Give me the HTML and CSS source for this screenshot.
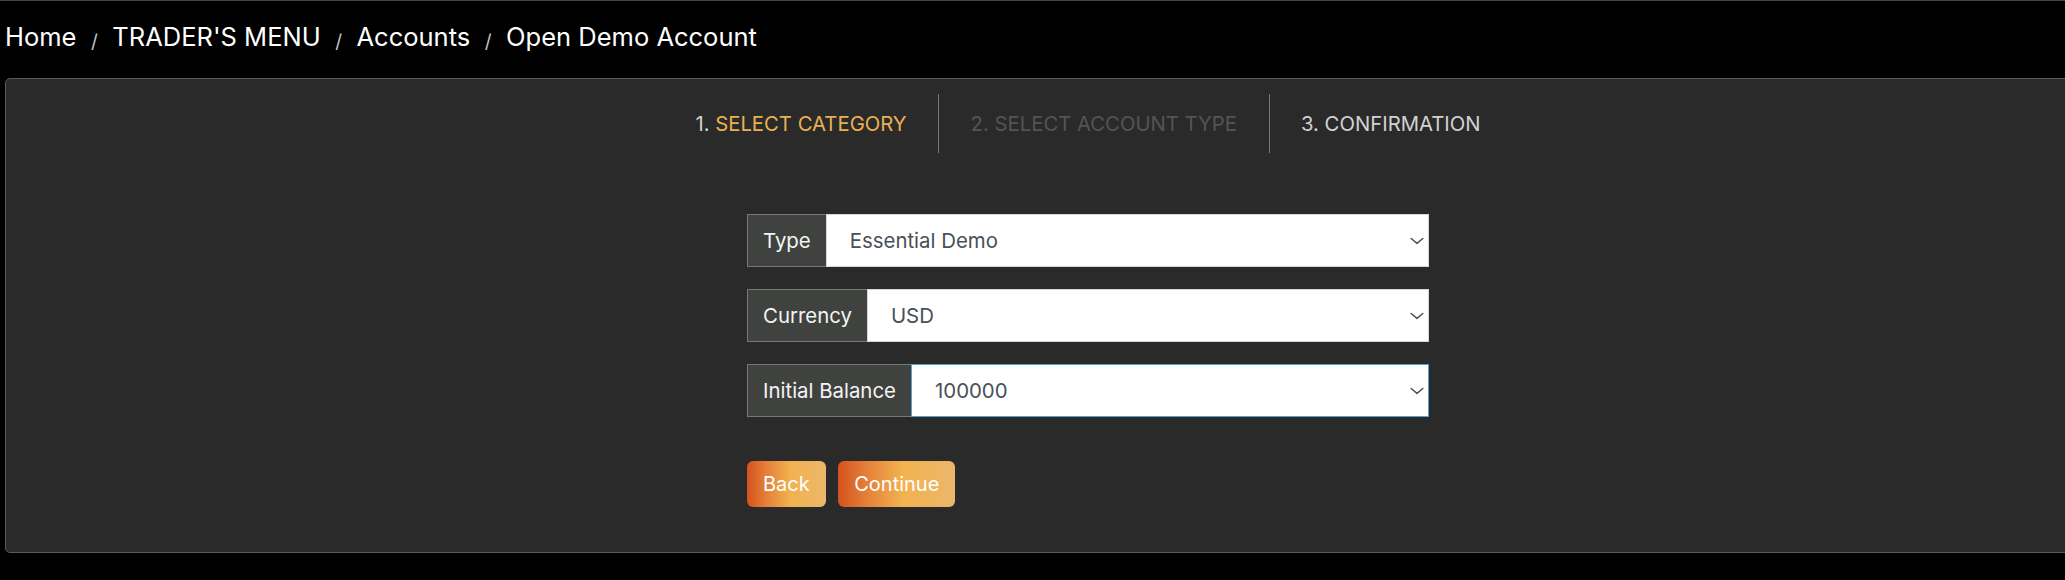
FILE: index.html
```html
<!DOCTYPE html>
<html>
<head>
    <link rel="stylesheet" href="styles.css">
</head>
<body>

<ol class="crumbs">
  <li><a href="#">Home</a></li>
  <li><a href="#">TRADER'S MENU</a></li>
  <li><a href="#">Accounts</a></li>
  <li>Open Demo Account</li>
</ol>

<div class="card">
  <ul class="steps">
    <li>1.&nbsp;<span class="current">SELECT CATEGORY</span></li>
    <li class="todo">2. SELECT ACCOUNT TYPE</li>
    <li>3. CONFIRMATION</li>
  </ul>

  <form class="demo-form">
    <div class="field">
      <label for="type">Type</label>
      <div class="select-box">
        <select id="type" name="type">
          <option>Essential Demo</option>
        </select>
        <svg viewBox="0 0 14 8"><path d="M1.2 1.5 L7 6.3 L12.8 1.5"/></svg>
      </div>
    </div>

    <div class="field">
      <label for="currency">Currency</label>
      <div class="select-box">
        <select id="currency" name="currency">
          <option>USD</option>
        </select>
        <svg viewBox="0 0 14 8"><path d="M1.2 1.5 L7 6.3 L12.8 1.5"/></svg>
      </div>
    </div>

    <div class="field">
      <label for="balance">Initial Balance</label>
      <div class="select-box focused">
        <select id="balance" name="balance">
          <option>100000</option>
        </select>
        <svg viewBox="0 0 14 8"><path d="M1.2 1.5 L7 6.3 L12.8 1.5"/></svg>
      </div>
    </div>

    <div class="actions">
      <button type="button" class="btn">Back</button>
      <button type="button" class="btn">Continue</button>
    </div>
  </form>
</div>

</body>
</html>
```

FILE: styles.css
```css
body {
  margin: 0;
  background: #000;
  border-top: 1px solid #454545;
  font-family: Inter, "Noto Sans", sans-serif;
  overflow: hidden;
}

/* breadcrumb */
.crumbs {
  display: flex;
  align-items: center;
  height: 37px;
  list-style: none;
  margin: 0;
  padding: 17px 5px 23px;
  font-size: 25.5px;
  line-height: 37px;
  color: #fff;
}

.crumbs a {
  color: #fff;
  text-decoration: none;
}

.crumbs li + li::before {
  content: "/";
  padding: 0 14.5px;
  font-size: 19px;
  line-height: 1;
  vertical-align: -2px;
  color: #c4c4c4;
}

/* main panel */
.card {
  box-sizing: border-box;
  width: 2166px;
  height: 475px;
  margin-left: 5px;
  padding-top: 15px;
  background: #2a2a2a;
  border: 1px solid #5a5a5a;
  border-radius: 5px;
}

.steps {
  display: flex;
  justify-content: center;
  list-style: none;
  margin: 0;
  padding: 0;
  font-size: 20.3px;
}

.steps li {
  display: flex;
  align-items: center;
  height: 59px;
  padding: 0 31.5px;
  color: #d2d2d2;
}

.steps li + li {
  border-left: 1px solid #7b7b7b;
}

.steps .current {
  color: #eab052;
}

.steps .todo {
  color: #545454;
}

/* form */
.demo-form {
  width: 682px;
  margin: 61px auto 0;
}

.field {
  display: flex;
  height: 53px;
  margin-bottom: 22px;
}

.field label {
  display: flex;
  align-items: center;
  padding: 0 15px;
  background: #40423f;
  border: 1px solid #767875;
  border-right: 0;
  color: #f4f4f4;
  font-size: 20.4px;
}

.select-box {
  position: relative;
  flex: 1;
}

.select-box select {
  box-sizing: border-box;
  width: 100%;
  height: 100%;
  padding: 0 40px 0 23px;
  -webkit-appearance: none;
  appearance: none;
  background: #fff;
  border: 1px solid #d3d7db;
  border-radius: 0;
  color: #495057;
  font-family: inherit;
  font-size: 20.4px;
  outline: none;
}

.select-box.focused select {
  border-color: #5a9fd4;
}

.select-box svg {
  position: absolute;
  right: 5px;
  top: 50%;
  width: 14px;
  height: 8px;
  margin-top: -4px;
  pointer-events: none;
}

.select-box path {
  fill: none;
  stroke: #50555a;
  stroke-width: 1.6;
  stroke-linecap: round;
  stroke-linejoin: round;
}

.actions {
  display: flex;
  gap: 12.5px;
  margin-top: 44px;
}

.btn {
  height: 46px;
  padding: 0 16px;
  border: none;
  border-radius: 6px;
  background: linear-gradient(to right, #d4521d 0%, #e5813a 25%, #f1b24f 55%, #ecb76c 100%);
  color: #fff;
  font-family: inherit;
  font-size: 20px;
  cursor: pointer;
}
```
